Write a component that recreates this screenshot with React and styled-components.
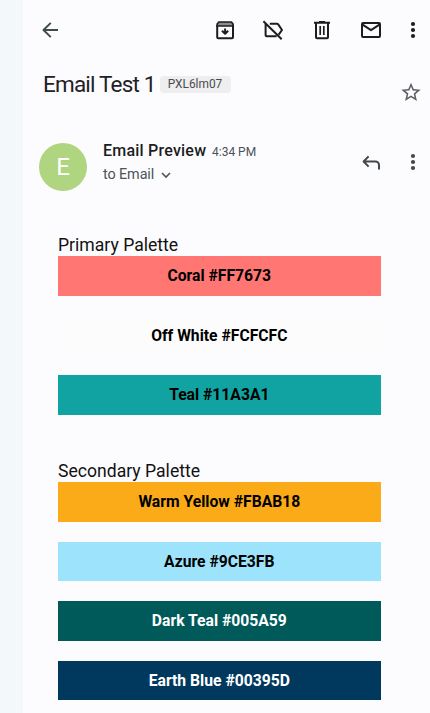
import React from "react";
import styled, { createGlobalStyle } from "styled-components";

const GlobalStyle = createGlobalStyle`
  * { box-sizing: border-box; }
  html, body { margin: 0; padding: 0; background: #fcfcff; }
  body { overflow: hidden; }
`;

const Screen = styled.div`
  display: flex;
  width: 430px;
  height: 713px;
  overflow: hidden;
  background: #fcfcff;
  font-family: Roboto, sans-serif;
`;

const Gutter = styled.div`
  flex: 0 0 23px;
  background: #f3f8fb;
`;

const Page = styled.main`
  flex: 1;
  min-width: 0;
`;

const Toolbar = styled.header`
  display: flex;
  align-items: center;
  height: 59px;
  padding-left: 15px;
`;

const Icon = styled.svg`
  display: block;
  flex: none;
  width: 24px;
  height: 24px;
  margin-left: ${(p) => p.$gap || 0}px;
  fill: none;
  stroke: ${(p) => p.$color || "#1b1d20"};
  stroke-width: 2;
  stroke-linejoin: round;
`;

const Subject = styled.section`
  display: flex;
  align-items: flex-start;
  height: 79px;
  padding: 12px 0 0 20px;
`;

const Title = styled.h1`
  margin: 0;
  width: 117px;
  font-size: 22.5px;
  line-height: 26px;
  font-weight: 400;
  letter-spacing: -0.8px;
  white-space: nowrap;
  color: #1f2124;
`;

const Label = styled.span`
  width: 71px;
  height: 17px;
  margin-top: 5px;
  padding-right: 1px;
  border-radius: 4px;
  background: #eeeeee;
  color: #4a4c50;
  font-size: 11.9px;
  line-height: 17px;
  text-align: center;
`;

const StarSlot = styled.div`
  padding-top: 9px;
`;

const Sender = styled.section`
  display: flex;
  height: 97px;
  padding-left: 16px;
`;

const Avatar = styled.div`
  width: 48px;
  height: 48px;
  margin-top: 4.5px;
  border-radius: 50%;
  background: #afd581;
  color: #fff;
  font-size: 24px;
  font-weight: 400;
  line-height: 49px;
  text-align: center;
`;

const Details = styled.div`
  width: 240px;
  padding: 3px 0 0 16px;
`;

const NameLine = styled.div`
  display: flex;
  align-items: baseline;
  height: 24px;
  line-height: 20px;
`;

const Name = styled.span`
  width: 109px;
  font-size: 16px;
  font-weight: 500;
  letter-spacing: 0.22px;
  white-space: nowrap;
  color: #1b1d20;
`;

const Time = styled.span`
  font-size: 12px;
  color: #4c5258;
  white-space: nowrap;
`;

const Recipient = styled.div`
  display: flex;
  align-items: center;
  height: 19px;
  font-size: 14.4px;
  letter-spacing: -0.1px;
  color: #4c5258;
`;

const Chevron = styled.svg`
  width: 10px;
  height: 8px;
  margin-left: 7px;
  fill: none;
  stroke: #4c5258;
  stroke-width: 1.6;
`;

const Actions = styled.div`
  display: flex;
  height: 36px;
  padding-top: 12px;
`;

const Body = styled.article`
  width: 322.6px;
  margin-left: 35px;
`;

const Palette = styled.section`
  height: 226px;
`;

const PaletteTitle = styled.h2`
  margin: 0;
  height: 21px;
  font-size: 17.6px;
  line-height: 21px;
  font-weight: 400;
  color: #111;
`;

const Swatch = styled.div`
  height: 39.5px;
  margin-bottom: 20.1px;
  background: ${(p) => p.$fill};
  color: ${(p) => (p.$light ? "#fff" : "#000")};
  font-size: 15.7px;
  font-weight: 700;
  line-height: 39.6px;
  text-align: center;
`;

const Back = () => (
  <Icon viewBox="0 0 24 24" $color="#40494c">
    <path d="M20 12H5.2M12.8 4.9L5.5 12l7.3 7.1" />
  </Icon>
);

const Archive = () => (
  <Icon viewBox="0 0 24 24" $gap={151.4}>
    <path d="M4.2 7v12.2a1 1 0 0 0 1 1h13.8a1 1 0 0 0 1-1V7" />
    <path d="M4.2 8V6l1.6-2h12.6L20 6v2z" fill="#8b8c8e" strokeWidth="1.7" />
    <path d="M12.1 10.5v5M9 12.7l3.1 3.1 3.1-3.1" />
  </Icon>
);

const LabelOff = () => (
  <Icon viewBox="0 0 24 24" $gap={24.1}>
    <path d="M8.8 5.8H16a1.5 1.5 0 0 1 1.2.6L21 12l-3.3 4.6M4.6 6v11.2a1 1 0 0 0 1 1H15.6M2.4 3.2L20.7 21.2" />
  </Icon>
);

const Trash = () => (
  <Icon viewBox="0 0 24 24" $gap={24.5}>
    <path d="M4 4.8h16M9 3.9h6M6 5v14.2a1 1 0 0 0 1 1h10a1 1 0 0 0 1-1V5" />
    <path d="M10.2 8v9M13.8 8v9" strokeWidth="1.7" />
  </Icon>
);

const Mail = () => (
  <Icon viewBox="0 0 24 24" $gap={24.7}>
    <rect x="3" y="5" width="18" height="14" rx="1" />
    <path d="M3.2 6.4l8.8 5.8 8.8-5.8" />
  </Icon>
);

const More = ({ gap, color = "#1b1d20" }) => (
  <Icon viewBox="0 0 24 24" $gap={gap}>
    <g fill={color} stroke="none">
      <circle cx="12" cy="6" r="2.1" />
      <circle cx="12" cy="12" r="2.1" />
      <circle cx="12" cy="18" r="2.1" />
    </g>
  </Icon>
);

const Star = () => (
  <Icon viewBox="-0.5 -0.8 25 25" $gap={168}>
    <path
      fill="#5b5e62"
      stroke="none"
      d="M22 9.24l-7.19-.62L12 2 9.19 8.63 2 9.24l5.46 4.73L5.82 21 12 17.27 18.18 21l-1.63-7.03L22 9.24zM12 15.4l-3.76 2.27 1-4.28-3.32-2.88 4.38-.38L12 6.1l1.71 4.04 4.38.38-3.32 2.88 1 4.28L12 15.4z"
    />
  </Icon>
);

const Reply = () => (
  <Icon viewBox="0 0 24 24" $gap={32} $color="#41474d">
    <path d="M9.6 6.4L4.6 11.5l5 5.1M4.6 11.5H16.5a3.5 3.5 0 0 1 3.5 3.5v4.4" />
  </Icon>
);

const palettes = [
  {
    title: "Primary Palette",
    colors: [
      ["Coral", "#FF7673"],
      ["Off White", "#FCFCFC"],
      ["Teal", "#11A3A1"],
    ],
  },
  {
    title: "Secondary Palette",
    colors: [
      ["Warm Yellow", "#FBAB18"],
      ["Azure", "#9CE3FB"],
      ["Dark Teal", "#005A59", true],
      ["Earth Blue", "#00395D", true],
    ],
  },
];

export default function App() {
  return (
    <Screen>
      <GlobalStyle />
      <Gutter />
      <Page>
        <Toolbar>
          <Back />
          <Archive />
          <LabelOff />
          <Trash />
          <Mail />
          <More gap={18.3} />
        </Toolbar>
        <Subject>
          <Title>Email Test 1</Title>
          <Label>PXL6lm07</Label>
          <StarSlot>
            <Star />
          </StarSlot>
        </Subject>
        <Sender>
          <Avatar>E</Avatar>
          <Details>
            <NameLine>
              <Name>Email Preview</Name>
              <Time>4:34 PM</Time>
            </NameLine>
            <Recipient>
              to Email
              <Chevron viewBox="0 0 10 8">
                <path d="M1 2l4 4 4-4" />
              </Chevron>
            </Recipient>
          </Details>
          <Actions>
            <Reply />
            <More gap={18} color="#41474d" />
          </Actions>
        </Sender>
        <Body>
          {palettes.map((palette) => (
            <Palette key={palette.title}>
              <PaletteTitle>{palette.title}</PaletteTitle>
              {palette.colors.map(([name, hex, light]) => (
                <Swatch key={hex} $fill={hex} $light={light}>
                  {name} {hex}
                </Swatch>
              ))}
            </Palette>
          ))}
        </Body>
      </Page>
    </Screen>
  );
}
